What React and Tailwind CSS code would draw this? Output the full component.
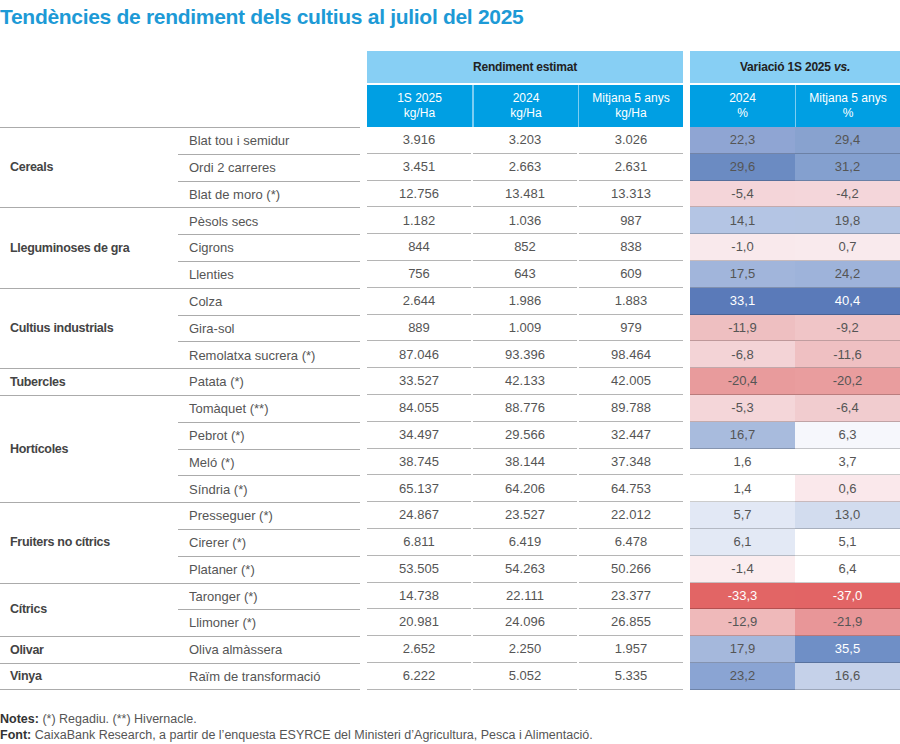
import React from 'react';

const groups = [
  {
    name: 'Cereals',
    rows: [
      ['Blat tou i semidur', '3.916', '3.203', '3.026', ['22,3', '#8fa5d3'], ['29,4', '#88a2cf']],
      ['Ordi 2 carreres', '3.451', '2.663', '2.631', ['29,6', '#6b8bc2'], ['31,2', '#84a0cf']],
      ['Blat de moro (*)', '12.756', '13.481', '13.313', ['-5,4', '#f4d5d9'], ['-4,2', '#f4d6da']],
    ],
  },
  {
    name: 'Lleguminoses de gra',
    rows: [
      ['Pèsols secs', '1.182', '1.036', '987', ['14,1', '#b4c5e4'], ['19,8', '#b4c5e3']],
      ['Cigrons', '844', '852', '838', ['-1,0', '#f9e9ec'], ['0,7', '#f9eaed']],
      ['Llenties', '756', '643', '609', ['17,5', '#a1b5db'], ['24,2', '#9eb3da']],
    ],
  },
  {
    name: 'Cultius industrials',
    rows: [
      ['Colza', '2.644', '1.986', '1.883', ['33,1', '#5a7ab9', true], ['40,4', '#5a7ab9', true]],
      ['Gira-sol', '889', '1.009', '979', ['-11,9', '#eebfc1'], ['-9,2', '#f0c5c7']],
      ['Remolatxa sucrera (*)', '87.046', '93.396', '98.464', ['-6,8', '#f3d3d6'], ['-11,6', '#efc0c2']],
    ],
  },
  {
    name: 'Tubercles',
    rows: [
      ['Patata (*)', '33.527', '42.133', '42.005', ['-20,4', '#e89b9c'], ['-20,2', '#e99d9e']],
    ],
  },
  {
    name: 'Hortícoles',
    rows: [
      ['Tomàquet (**)', '84.055', '88.776', '89.788', ['-5,3', '#f4d6d9'], ['-6,4', '#f1cccf']],
      ['Pebrot (*)', '34.497', '29.566', '32.447', ['16,7', '#a8bbdd'], ['6,3', '#f6f7fc']],
      ['Meló (*)', '38.745', '38.144', '37.348', ['1,6', '#ffffff'], ['3,7', '#ffffff']],
      ['Síndria (*)', '65.137', '64.206', '64.753', ['1,4', '#ffffff'], ['0,6', '#fae8eb']],
    ],
  },
  {
    name: 'Fruiters no cítrics',
    rows: [
      ['Presseguer (*)', '24.867', '23.527', '22.012', ['5,7', '#e2e8f5'], ['13,0', '#d2dcee']],
      ['Cirerer (*)', '6.811', '6.419', '6.478', ['6,1', '#e3e9f5'], ['5,1', '#ffffff']],
      ['Plataner (*)', '53.505', '54.263', '50.266', ['-1,4', '#fbedef'], ['6,4', '#ffffff']],
    ],
  },
  {
    name: 'Cítrics',
    rows: [
      ['Taronger (*)', '14.738', '22.111', '23.377', ['-33,3', '#e26565', true], ['-37,0', '#e26465', true]],
      ['Llimoner (*)', '20.981', '24.096', '26.855', ['-12,9', '#efb9ba'], ['-21,9', '#e89698']],
    ],
  },
  {
    name: 'Olivar',
    rows: [
      ['Oliva almàssera', '2.652', '2.250', '1.957', ['17,9', '#a5b8dc'], ['35,5', '#6f8fc6', true]],
    ],
  },
  {
    name: 'Vinya',
    rows: [
      ['Raïm de transformació', '6.222', '5.052', '5.335', ['23,2', '#8aa4d3'], ['16,6', '#c5d1e9']],
    ],
  },
];

const cols = 'grid grid-cols-[178px_182px_7px_105px_106px_105px_7px_105px_105px]';

const VarCell = ({ v }) => (
  <div
    className={`flex items-center justify-center border-b border-black/20 ${v[2] ? 'text-white' : 'text-[#555]'}`}
    style={{ backgroundColor: v[1] }}
  >
    {v[0]}
  </div>
);

const App = () => {
  let rowStart = 1;
  const body = [];
  groups.forEach((g, gi) => {
    const last = gi === groups.length - 1;
    body.push(
      <div
        key={g.name}
        className={`col-start-1 flex items-center pl-[10px] text-[12.5px] tracking-[-0.3px] font-bold text-[#444] border-t border-[#ababab] ${last ? 'border-b' : ''}`}
        style={{ gridRow: `${rowStart} / span ${g.rows.length}` }}
      >
        {g.name}
      </div>
    );
    g.rows.forEach((r, ri) => {
      const row = rowStart + ri;
      const lastRow = last && ri === g.rows.length - 1;
      body.push(
        <React.Fragment key={r[0]}>
          <div
            className={`col-start-2 flex items-center pl-[11px] border-t border-[#ababab] ${lastRow ? 'border-b' : ''}`}
            style={{ gridRow: row }}
          >
            {r[0]}
          </div>
          <div className="col-start-4 mr-[1px] flex items-center justify-center border-b border-[#b5b5b5]" style={{ gridRow: row }}>{r[1]}</div>
          <div className="col-start-5 mx-[1px] flex items-center justify-center border-b border-[#b5b5b5]" style={{ gridRow: row }}>{r[2]}</div>
          <div className="col-start-6 ml-[1px] flex items-center justify-center border-b border-[#b5b5b5]" style={{ gridRow: row }}>{r[3]}</div>
          <div className="col-start-8" style={{ gridRow: row, display: 'grid' }}><VarCell v={r[4]} /></div>
          <div className="col-start-9" style={{ gridRow: row, display: 'grid' }}><VarCell v={r[5]} /></div>
        </React.Fragment>
      );
    });
    rowStart += g.rows.length;
  });

  return (
    <div className="w-[900px] h-[744px] bg-white font-['Liberation_Sans',Arial,sans-serif] text-[13px] text-[#555] overflow-hidden">
      <h1 className="h-[51px] pt-[4px] text-[21px] leading-[26px] font-bold text-[#1d9ad6] tracking-[-0.3px]">
        Tendències de rendiment dels cultius al juliol del 2025
      </h1>

      {/* Header */}
      <div className={`${cols} grid-rows-[32px_42px] gap-y-[2px]`}>
        <div className="col-start-4 col-span-3 bg-[#87cff4] flex items-center justify-center font-bold text-[#222] text-[12px] tracking-[-0.2px]">
          Rendiment estimat
        </div>
        <div className="col-start-8 col-span-2 bg-[#87cff4] flex items-center justify-center font-bold text-[#222] text-[12px] tracking-[-0.2px]">
          Variació 1S 2025&nbsp;<i>vs.</i>
        </div>
        <div className="row-start-2 col-start-4 bg-[#009fe3] text-white text-[12px] leading-[15px] flex flex-col items-center justify-center">
          <span>1S 2025</span><span>kg/Ha</span>
        </div>
        <div className="row-start-2 col-start-5 bg-[#009fe3] border-l-2 border-[#7ccdf2] text-white text-[12px] leading-[15px] flex flex-col items-center justify-center">
          <span>2024</span><span>kg/Ha</span>
        </div>
        <div className="row-start-2 col-start-6 bg-[#009fe3] border-l border-[#7ccdf2] text-white text-[12px] leading-[15px] flex flex-col items-center justify-center">
          <span>Mitjana 5 anys</span><span>kg/Ha</span>
        </div>
        <div className="row-start-2 col-start-8 bg-[#009fe3] text-white text-[12px] leading-[15px] flex flex-col items-center justify-center">
          <span>2024</span><span>%</span>
        </div>
        <div className="row-start-2 col-start-9 bg-[#009fe3] border-l border-[#7ccdf2] text-white text-[12px] leading-[15px] flex flex-col items-center justify-center">
          <span>Mitjana 5 anys</span><span>%</span>
        </div>
      </div>

      {/* Body */}
      <div className={`${cols} auto-rows-[26.8px]`}>{body}</div>

      {/* Footer */}
      <div className="mt-[21px] text-[12.5px] leading-[16px] text-[#555]">
        <p><span className="font-bold text-[#333]">Notes:</span> (*) Regadiu. (**) Hivernacle.</p>
        <p><span className="font-bold text-[#333]">Font:</span> CaixaBank Research, a partir de l’enquesta ESYRCE del Ministeri d’Agricultura, Pesca i Alimentació.</p>
      </div>
    </div>
  );
};

export default App;
